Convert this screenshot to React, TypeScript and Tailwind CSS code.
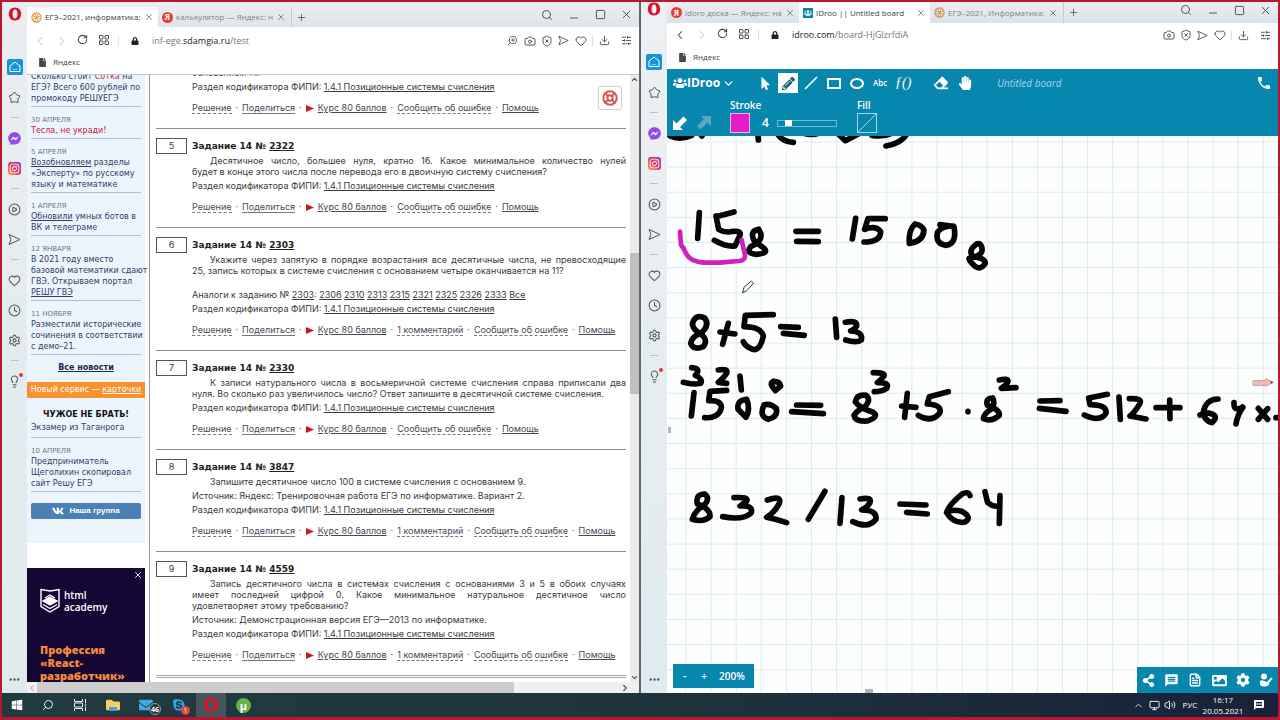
import type { ReactNode } from 'react';
import {
  Search, Minus, Square, X, Plus, ChevronLeft, ChevronRight, ChevronDown, ChevronUp, RotateCw, LayoutGrid,
  Camera, ShieldX, Heart, Download, SlidersHorizontal, CirclePlay, Clock,
  Settings, Lightbulb, Ellipsis, ZoomIn, FileText, Monitor, Volume2, LifeBuoy,
} from 'lucide-react';
import {
  FaMousePointer, FaPencilAlt, FaEraser, FaHandPaper, FaCog, FaShareAlt, FaUsers, FaVk, FaLock,
  FaInstagram, FaFacebookMessenger, FaWindows, FaImage, FaFile, FaSkype, FaEnvelope, FaFolder,
} from 'react-icons/fa';
import { MdMessage, MdPhone } from 'react-icons/md';

/* ---------- small marks ---------- */

function OperaMark({ className }: { className: string }) {
  return (
    <svg viewBox="0 0 14 14" className={className} aria-hidden="true">
      <path fillRule="evenodd" fill="#d4142c" d="M7 .5C3.200.5.8 3.300.8 7s2.400 6.500 6.200 6.500 6.200-2.800 6.200-6.500S10.800.5 7 .5Zm0 2c1.700 0 2.500 2 2.500 4.500S8.700 11.500 7 11.500 4.500 9.500 4.500 7 5.300 2.500 7 2.500Z" />
    </svg>
  );
}

function EgeMark() {
  return (
    <svg viewBox="0 0 12 12" className="size-[11px] shrink-0" fill="none" stroke="#d98b3f" aria-hidden="true">
      <circle cx="6" cy="6" r="5" strokeWidth="1.2" />
      <path d="M1.500 4 10.500 8M1.500 8 10.500 4M4 1.500 8 10.500M8 1.500 4 10.500" strokeWidth=".9" />
    </svg>
  );
}

function YandexMark() {
  return (
    <span className="flex size-[11px] shrink-0 items-center justify-center rounded-full bg-[#e5402f] text-[8px] font-bold leading-none text-white">
      Я
    </span>
  );
}

function DrooMark() {
  return (
    <span className="flex size-[10px] shrink-0 items-center justify-center bg-[#0a84a8] text-white">
      <FaUsers size={8} />
    </span>
  );
}

function PlaneIcon({ className }: { className: string }) {
  return (
    <svg viewBox="0 0 13 13" className={className} fill="none" stroke="currentColor" strokeWidth="1" strokeLinejoin="round" aria-hidden="true">
      <path d="M1 1.500 12 6.500 1 11.500 3 6.500Z" />
    </svg>
  );
}

function StarIcon() {
  return (
    <svg viewBox="0 0 13 13" className="size-[13px]" fill="none" stroke="currentColor" strokeWidth="1" strokeLinejoin="round" aria-hidden="true">
      <path d="M6.500 1 8.600 3.700 12 5 10 7.900 9.900 11.500 6.500 10.700 3.100 11.500 3 7.900 1 5 4.400 3.700Z" />
    </svg>
  );
}

function HomeIcon() {
  return (
    <svg viewBox="0 0 12 12" className="size-[12px]" fill="none" stroke="currentColor" strokeWidth="1" strokeLinejoin="round" aria-hidden="true">
      <path d="M6 1 11 5V10.500H1V5Z" />
      <path d="M3.500 8.500H8.500" strokeOpacity=".5" />
    </svg>
  );
}

/* ---------- browser chrome ---------- */

type TabInfo = { title: string; icon: 'ege' | 'yandex' | 'droo'; active?: boolean };

function Tab({ tab }: { tab: TabInfo }) {
  return (
    <div
      className={
        tab.active
          ? 'flex w-[131px] items-center gap-[3px] bg-white pl-[4px] pr-[4px] text-[#3c4043]'
          : 'flex w-[132px] items-center gap-[3px] pl-[4px] pr-[4px] text-[#7b838a]'
      }
    >
      {tab.icon === 'ege' && <EgeMark />}
      {tab.icon === 'yandex' && <YandexMark />}
      {tab.icon === 'droo' && <DrooMark />}
      <button className="min-w-0 flex-1 whitespace-nowrap text-left text-[8px] leading-[14px]">{tab.title}</button>
      <button aria-label="Закрыть вкладку" className="shrink-0 text-[#555]">
        <X size={10} strokeWidth={1.6} />
      </button>
    </div>
  );
}

function SideSlot({ label, children }: { label: string; children: ReactNode }) {
  return (
    <button aria-label={label} className="relative flex h-[30px] w-full shrink-0 items-center justify-center">
      {children}
    </button>
  );
}

function SideDash() {
  return (
    <div className="flex h-[11px] shrink-0 items-center justify-center">
      <div className="h-px w-2 bg-[#b9c1c4]" />
    </div>
  );
}

function OperaSidebar({ upper }: { upper?: boolean }) {
  return (
    <nav
      className={
        upper
          ? 'flex w-[26px] shrink-0 flex-col bg-linear-to-b from-[#eef0f2] to-[#dfebef] text-[#4d5558]'
          : 'flex w-[25px] shrink-0 flex-col bg-linear-to-b from-[#e9edf0] to-[#e0eaed] text-[#4d5558]'
      }
    >
      <button aria-label="Opera" className={upper ? 'flex h-[45px] justify-center' : 'flex h-[50px] justify-center pt-[5px]'}>
        <OperaMark className="size-[14px]" />
      </button>
      <SideSlot label="Главная">
        <span className="flex size-[16px] items-center justify-center rounded-[2px] bg-[#1595d8] text-white">
          <HomeIcon />
        </span>
      </SideSlot>
      <SideSlot label="Закладки"><StarIcon /></SideSlot>
      <SideDash />
      <SideSlot label="Messenger"><FaFacebookMessenger size={13} color="#9148f0" /></SideSlot>
      <SideSlot label="Instagram">
        <span className="flex size-[13px] items-center justify-center rounded-[3px] bg-linear-to-tr from-[#f9a13c] via-[#e1306c] to-[#8a3ab9] text-white">
          <FaInstagram size={11} />
        </span>
      </SideSlot>
      <SideDash />
      <SideSlot label="Плеер"><CirclePlay size={13} strokeWidth={1.9} /></SideSlot>
      <SideSlot label="Мой поток"><PlaneIcon className="size-[13px]" /></SideSlot>
      <SideDash />
      <SideSlot label="Избранное"><Heart size={13} strokeWidth={1.9} /></SideSlot>
      <SideSlot label="История"><Clock size={13} strokeWidth={1.9} /></SideSlot>
      <SideSlot label="Настройки"><Settings size={13} strokeWidth={1.9} /></SideSlot>
      <SideDash />
      <SideSlot label="Советы">
        <Lightbulb size={13} strokeWidth={1.9} />
        <span className="absolute right-[4px] top-[7px] size-[4px] rounded-full bg-[#d9413c]" />
      </SideSlot>
      <button aria-label="Ещё" className="mt-auto flex h-[28px] items-center justify-center">
        <Ellipsis size={13} strokeWidth={2.500} />
      </button>
    </nav>
  );
}

function ToolIcon({ label, children }: { label: string; children: ReactNode }) {
  return (
    <button aria-label={label} className="flex h-5 w-[17px] items-center justify-center">
      {children}
    </button>
  );
}

type WindowProps = {
  tabs: TabInfo[];
  host: string;
  prefix?: string;
  path: string;
  upper?: boolean;
  children: ReactNode;
};

function BrowserWindow({ tabs, host, prefix, path, upper, children }: WindowProps) {
  return (
    <section className="flex min-w-0 flex-1 border-l-2 border-[#5d686c] bg-white first:border-l-0">
      <OperaSidebar upper={upper} />
      <div className="flex min-w-0 flex-1 flex-col">
        <header
          className={
            upper
              ? 'flex h-[21px] shrink-0 bg-linear-to-b from-[#eeedf2] to-[#dae3e8]'
              : 'flex h-[25px] shrink-0 bg-linear-to-b from-[#eeedf2] to-[#dce6ea] pt-[5px]'
          }
        >
          {tabs.map((t) => <Tab key={t.title} tab={t} />)}
          <button aria-label="Новая вкладка" className="ml-[1px] border-l border-[#c5ccd1] px-[4px] text-[#444]">
            <Plus size={11} strokeWidth={1.6} />
          </button>
          <div className="ml-auto flex items-center pb-[5px] text-[#3c4a52]">
            <button aria-label="Поиск" className="flex w-[27px] justify-center"><Search size={12} strokeWidth={1.8} /></button>
            <button aria-label="Свернуть" className="flex w-[27px] justify-center pt-[6px]"><Minus size={12} strokeWidth={1.8} /></button>
            <button aria-label="Развернуть" className="flex w-[27px] justify-center"><Square size={11} strokeWidth={2} /></button>
            <button aria-label="Закрыть" className="flex w-[25px] justify-center"><X size={13} strokeWidth={1.6} /></button>
          </div>
        </header>
        <div className={upper ? 'flex h-[24px] shrink-0 items-center text-[#444]' : 'flex h-[27px] shrink-0 items-center text-[#444]'}>
          <div className="flex pl-[2px]">
            <button aria-label="Назад" className={upper ? 'flex w-[22px] justify-center' : 'flex w-[22px] justify-center text-[#c6c6c6]'}><ChevronLeft size={14} strokeWidth={1.8} /></button>
            <button aria-label="Вперёд" className="flex w-[21px] justify-center text-[#c6c6c6]"><ChevronRight size={14} strokeWidth={1.8} /></button>
            <button aria-label="Обновить" className="flex w-[21px] justify-center"><RotateCw size={11} strokeWidth={2.2} /></button>
            <button aria-label="Экспресс-панель" className="flex w-[21px] justify-center"><LayoutGrid size={12} strokeWidth={1.9} /></button>
          </div>
          <div className="ml-[4px] h-[10px] w-px bg-[#e0e0e0]" />
          <FaLock size={8} className="ml-[12px] shrink-0" color="#222" />
          <a href={'#' + path} aria-label="Адрес страницы" className="ml-[13px] min-w-0 flex-1 whitespace-nowrap text-[9px] leading-[14px] text-[#777]">
            {prefix}<span className="text-[#222]">{host}</span>{path}
          </a>
          <div className="flex items-center pr-[4px]">
            {!upper && <ToolIcon label="Масштаб"><ZoomIn size={11} strokeWidth={1.8} className="-scale-x-100" /></ToolIcon>}
            <ToolIcon label="Снимок"><Camera size={12} strokeWidth={1.8} /></ToolIcon>
            <ToolIcon label="Блокировка"><ShieldX size={12} strokeWidth={1.8} /></ToolIcon>
            <ToolIcon label="Отправить"><PlaneIcon className="size-[11px]" /></ToolIcon>
            <ToolIcon label="В закладки"><Heart size={12} strokeWidth={1.8} /></ToolIcon>
            <div className="mx-[3px] h-[10px] w-px bg-[#e0e0e0]" />
            <ToolIcon label="Загрузки"><Download size={11} strokeWidth={1.9} /></ToolIcon>
            <div className="w-[5px]" />
            <ToolIcon label="Простые настройки"><SlidersHorizontal size={11} strokeWidth={1.9} /></ToolIcon>
          </div>
        </div>
        <div
          className={
            upper
              ? 'flex h-[22px] shrink-0 items-center gap-[6px] pb-[2px] pl-[11px]'
              : 'flex h-[21px] shrink-0 items-center gap-[6px] border-b border-[#c3c7c9] pl-[11px] pb-[4px]'
          }
        >
          <FaFile size={9} color="#4a4a4a" />
          <a href="#yandex" className="text-[8px] leading-[12px] text-[#444]">Яндекс</a>
        </div>
        {children}
      </div>
    </section>
  );
}

/* ---------- exam page ---------- */

function NewsItem({ date, children }: { date?: string; children: ReactNode }) {
  return (
    <article className="mx-[4px] border-b border-[#b4bfcd] pb-[2px] pt-[8px]">
      {date && <time className="block text-[7px] leading-[10px] text-[#6c7683]">{date}</time>}
      <p className="whitespace-nowrap text-[8px] leading-[11px] text-[#353c66]">{children}</p>
    </article>
  );
}

function NewsColumn() {
  return (
    <aside className="w-[118px] shrink-0">
      <div className="-mt-[12px] bg-[#ecf4fe] pb-[24px]">
        <NewsItem>Сколько стоит <span className="text-[#b5304a]">Сотка</span> на<br />ЕГЭ? Всего 600 рублей по<br />промокоду РЕШУЕГЭ</NewsItem>
        <NewsItem date="30 АПРЕЛЯ"><span className="text-[#c9203c]">Тесла, не укради!</span></NewsItem>
        <NewsItem date="5 АПРЕЛЯ"><a href="#expert" className="underline">Возобновляем</a> разделы<br />«Эксперту» по русскому<br />языку и математике</NewsItem>
        <NewsItem date="1 АПРЕЛЯ"><a href="#bots" className="underline">Обновили</a> умных ботов в<br />ВК и телеграме</NewsItem>
        <NewsItem date="12 ЯНВАРЯ">В 2021 году вместо<br />базовой математики сдают<br />ГВЭ. Открываем портал<br /><a href="#gve" className="underline">РЕШУ ГВЭ</a></NewsItem>
        <NewsItem date="11 НОЯБРЯ">Разместили исторические<br />сочинения в соответствии<br />с демо–21.</NewsItem>
        <a href="#news" className="block py-[6px] text-center text-[8px] font-bold leading-[14px] text-[#22284d] underline">Все новости</a>
        <p className="mt-[1px] whitespace-nowrap bg-[#f8922f] text-center text-[8px] leading-[16px] text-white">
          Новый сервис — <a href="#cards" className="underline">карточки</a>
        </p>
        <p className="pt-[10px] text-center text-[8px] font-bold leading-[13px] text-[#111]">ЧУЖОЕ НЕ БРАТЬ!</p>
        <p className="mx-[4px] whitespace-nowrap border-b border-[#b4bfcd] pb-[3px] text-[8px] leading-[13px] text-[#353c66]">Экзамер из Таганрога</p>
        <NewsItem date="10 АПРЕЛЯ">Предприниматель<br />Щеголихин скопировал<br />сайт Решу ЕГЭ</NewsItem>
        <a href="#vk" className="mx-[4px] mt-[11px] flex h-[16px] items-center justify-center gap-[5px] rounded-[2px] bg-[#4a80b4] font-['Liberation_Sans',sans-serif] text-[8px] font-bold text-white">
          <FaVk size={12} /> Наша группа
        </a>
      </div>
      <div className="mt-[25px] h-[130px] bg-[#150733] px-[13px] text-white">
        <button aria-label="Закрыть рекламу" className="-mr-[11px] ml-auto block pt-[2px]"><X size={10} /></button>
        <div className="mt-[8px] flex items-center gap-[4px]">
          <svg viewBox="0 0 20 25" className="h-[25px] w-[20px]" fill="none" stroke="white" strokeWidth="1.400" aria-hidden="true">
            <path d="M1 1.500 10 3 19 1.500V18.500L10 24 1 18.500Z" />
            <path d="M3 13 10 9 17 13 10 17Z" fill="white" />
            <path d="M3 16.500 10 20.500 17 16.500M5 10 10 7 15 10" />
          </svg>
          <p className="font-['Open_Sans',sans-serif] text-[10px] font-semibold leading-[12px]">html<br />academy</p>
        </div>
        <p className="mt-[30px] whitespace-nowrap font-['Open_Sans',sans-serif] text-[11px] font-extrabold leading-[13px] text-[#f58b3c]">
          Профессия<br />«React-<br />разработчик»
        </p>
      </div>
    </aside>
  );
}

type Task = {
  n: number;
  id: string;
  lines: string[];
  similar?: string[];
  source?: string;
  comments?: boolean;
};

const tasks: Task[] = [
  {
    n: 5, id: '2322',
    lines: ['Десятичное число, большее нуля, кратно 16. Какое минимальное количество нулей', 'будет в конце этого числа после перевода его в двоичную систему счисления?'],
  },
  {
    n: 6, id: '2303', comments: true,
    lines: ['Укажите через запятую в порядке возрастания все десятичные числа, не превосходящие', '25, запись которых в системе счисления с основанием четыре оканчивается на 11?'],
    similar: ['2306', '2310', '2313', '2315', '2321', '2325', '2326', '2333', 'Все'],
  },
  {
    n: 7, id: '2330',
    lines: ['К записи натурального числа в восьмеричной системе счисления справа приписали два', 'нуля. Во сколько раз увеличилось число? Ответ запишите в десятичной системе счисления.'],
  },
  {
    n: 8, id: '3847', comments: true,
    lines: ['Запишите десятичное число 100 в системе счисления с основанием 9.'],
    source: 'Источник: Яндекс: Тренировочная работа ЕГЭ по информатике. Вариант 2.',
  },
  {
    n: 9, id: '4559', comments: true,
    lines: ['Запись десятичного числа в системах счисления с основаниями 3 и 5 в обоих случаях', 'имеет последней цифрой 0. Какое минимальное натуральное десятичное число', 'удовлетворяет этому требованию?'],
    source: 'Источник: Демонстрационная версия ЕГЭ—2013 по информатике.',
  },
];

function Topic() {
  return (
    <p className="leading-[14px]">
      Раздел кодификатора ФИПИ: <a href="#topic" className="underline">1.4.1 Позиционные системы счисления</a>
    </p>
  );
}

function TaskLinks({ comments }: { comments?: boolean }) {
  const dashed = 'border-b border-dashed border-[#777] leading-[11px]';
  return (
    <div className="mt-[7px] flex h-[14px] items-center gap-[4px] whitespace-nowrap text-[#444a55]">
      <a href="#solution" className={dashed}>Решение</a>
      <span>·</span>
      <a href="#share" className="border-b border-[#777] leading-[11px]">Поделиться</a>
      <span>·</span>
      <svg viewBox="0 0 8 7" className="h-[7px] w-[8px] fill-[#cf1a1a]" aria-hidden="true"><path d="M0 0 8 3.500 0 7Z" /></svg>
      <a href="#course" className="underline">Курс 80 баллов</a>
      <span>·</span>
      {comments && <><a href="#comments" className={dashed}>1 комментарий</a><span>·</span></>}
      <a href="#report" className={dashed}>Сообщить об ошибке</a>
      <span>·</span>
      <a href="#help" className="underline">Помощь</a>
    </div>
  );
}

function TaskCard({ task }: { task: Task }) {
  return (
    <article className="flex border-t border-[#8d8d8d] pb-[13px] pt-[9px]">
      <div className="flex h-[16px] w-[31px] shrink-0 items-center justify-center border border-[#555]">{task.n}</div>
      <div className="min-w-0 flex-1 pl-[5px]">
        <h2 className="font-['DejaVu_Sans',Verdana,sans-serif] font-bold leading-[17px] text-[#222]">
          Задание 14 № <a href={'#' + task.id} className="underline">{task.id}</a>
        </h2>
        <p className="mb-[2px] leading-[11px]">
          {task.lines.map((line, i) => (
            <span
              key={line}
              className={
                (i === 0 ? 'pl-[18px] ' : '') +
                (i < task.lines.length - 1 ? 'block whitespace-nowrap [text-align-last:justify]' : 'block whitespace-nowrap')
              }
            >
              {line}
            </span>
          ))}
        </p>
        {task.similar && (
          <p className="mt-[12px] leading-[14px]">
            Аналоги к заданию № <a href="#2303" className="underline">2303</a>:{' '}
            {task.similar.map((s) => <span key={s}><a href={'#' + s} className="underline">{s}</a> </span>)}
          </p>
        )}
        {task.source && <p className="leading-[14px]">{task.source}</p>}
        <Topic />
        <TaskLinks comments={task.comments} />
      </div>
    </article>
  );
}

function ExamPage() {
  return (
    <>
      <div className="relative flex min-h-0 flex-1 overflow-hidden font-['DejaVu_Sans',Verdana,sans-serif] text-[9px] text-[#3b3b3b]">
        <NewsColumn />
        <main className="ml-[4px] min-w-0 flex-1 overflow-hidden border-l border-[#9a9a9a] pl-[6px] pr-[4px] font-['Inter',Verdana,sans-serif]">
          <div className="-mt-[8px] pb-[13px] pl-[36px]">
            <p className="mb-[2px] leading-[11px]">основанием 11.</p>
            <Topic />
            <TaskLinks />
          </div>
          {tasks.map((t) => <TaskCard key={t.id} task={t} />)}
          <div className="h-[3px] border-y border-[#aaa]" />
        </main>
        <button aria-label="Помощь по сайту" className="absolute right-[17px] top-[11px] flex size-[24px] items-center justify-center rounded-[3px] border border-[#cfcfcf] bg-white">
          <LifeBuoy size={16} color="#d2575a" strokeWidth={3} />
        </button>
        <div className="flex w-[9px] shrink-0 flex-col items-center bg-[#ebebec] text-[#555]">
          <ChevronUp size={9} strokeWidth={3} />
          <div className="mt-[169px] h-[141px] w-full bg-[#bfbfc0]" />
          <ChevronDown size={9} strokeWidth={3} className="mt-auto" />
        </div>
      </div>
      <div className="flex h-[11px] shrink-0 items-center bg-[#f0f0f1] text-[#555]">
        <ChevronLeft size={10} strokeWidth={2.500} className="text-[#aaa]" />
        <div className="h-full w-[78%] bg-[#cdcdcd]" />
        <ChevronRight size={10} strokeWidth={3} className="ml-auto mr-[9px]" />
      </div>
    </>
  );
}

/* ---------- whiteboard ---------- */

const upperStrokes = [
  'M30 18Q60 32 95 16', 'M118 8 126 18', 'M293 0 295 30', 'M350 8Q365 35 400 37', 'M425 8Q455 18 482 8',
  'M535 12 556 32 595 12', 'M636 16Q672 22 700 8', 'M678 48Q735 38 745 0',
  'M118 248 113 325', 'M222 246 168 260M168 258 176 298Q195 310 220 304 244 302 240 316L225 348Q200 352 163 331',
  'M296 298Q268 302 282 332L312 355Q328 370 290 373 256 370 272 350 318 330 296 298',
  'M408 304H475', 'M410 334 475 335', 'M587 265 577 327', 'M676 266H624L614 298Q648 285 662 305 662 336 612 336',
  'M765 282Q745 300 748 340 790 335 792 300 785 285 765 282', 'M840 284 882 290Q892 342 857 346 824 340 833 306 845 288 880 288',
  'M950 342Q922 362 940 380 976 384 976 400 962 422 944 408 920 384 930 384 976 376 964 348 960 338 950 342',
  'M134 564Q106 550 97 582 100 600 122 612 146 630 130 650 100 662 92 640 95 620 125 608 150 584 134 564',
  'M180 606 225 612', 'M205 580 188 643', 'M340 554 256 556 252 590Q302 590 310 618 300 664 278 658 256 650 250 635',
  'M362 590 415 592', 'M370 610 433 616', 'M526 567 530 622', 'M556 577Q592 570 590 588 582 600 572 603 610 605 604 630 590 640 557 630',
];

const middleStrokes = [
  'M95 53Q125 55 106 76 130 88 122 100 100 105 70 97', 'M175 60Q205 55 200 70 190 86 175 97L200 100', 'M240 78 244 120',
  'M340 94Q330 98 336 108L346 122 362 108Q360 94 340 94', 'M102 128 94 198', 'M200 121 150 124 146 152Q186 150 184 175 175 206 134 203',
  'M260 148Q230 150 234 178L258 202Q272 176 260 148', 'M312 165Q296 200 325 208 355 200 349 175 330 158 312 165',
  'M410 165 482 166', 'M395 185 490 191', 'M618 136Q590 132 586 156 600 176 638 186 660 200 622 213 586 216 582 196 590 182 612 172 636 150 618 136',
  'M640 68Q678 68 672 78 660 92 652 98 690 96 680 115 665 125 643 125', 'M742 130 734 202', 'M725 168 768 172',
  'M865 125 808 140 802 162Q846 164 840 188 815 220 775 196', 'M924 184V185',
  'M998 144Q976 144 982 166 1020 178 1018 196 996 216 970 206 972 190 996 176 1006 156 998 144', 'M1018 90Q1044 84 1044 94 1040 106 1024 115L1068 113',
  'M134 432Q106 432 112 462 152 476 150 500 130 518 97 508 104 482 132 466 152 446 134 432',
  'M222 443Q268 440 260 454L240 468Q280 465 274 488 250 512 188 500', 'M322 450Q366 435 358 460 345 486 320 502 350 508 380 518',
  'M495 424 445 508', 'M546 443 540 520', 'M600 447Q636 440 630 458 620 474 605 480 652 480 648 508 625 538 578 515',
  'M720 462 798 465', 'M740 487 802 492', 'M930 437Q925 422 905 433 866 465 860 488 880 522 915 516 938 502 905 484 876 476 860 488',
  'M975 425 983 458Q1000 472 1018 468', 'M1020 437 1018 520',
];

const rightStrokes = [
  'M120 153 180 152', 'M118 175 198 184', 'M322 133 266 144 270 164Q322 164 318 190 300 218 253 195', 'M357 141 361 208',
  'M388 146Q428 144 420 160 405 186 390 198L438 207', 'M468 173H540', 'M509 150 510 206',
  'M654 147Q618 148 610 186 614 214 636 218 656 200 636 192 614 184 600 195', 'M702 158Q700 186 728 172', 'M728 172Q712 196 708 222',
  'M775 175 803 208', 'M803 176 775 208', 'M828 203H834',
];

function Board() {
  return (
    <svg className="block size-full" role="img" aria-label="Записи на доске">
      <defs>
        <pattern id="grid" x="18.500" y="5.500" width="25.100" height="25.130" patternUnits="userSpaceOnUse">
          <path d="M.5 0V25.130M0 .5H25.100" stroke="#dfe9f0" strokeWidth="1" fill="none" />
        </pattern>
      </defs>
      <rect width="100%" height="100%" fill="#fdfefe" />
      <rect width="100%" height="100%" fill="url(#grid)" />
      <g fill="none" stroke="#050505" strokeWidth="17" strokeLinecap="round" strokeLinejoin="round">
        <g transform="translate(-7 -6) scale(.3333)">
          {upperStrokes.map((d) => <path key={d} d={d} />)}
          <path d="M60 305 63 345Q70 352 76 366 88 396 135 398L180 398 235 393Q256 392 255 376L245 330" stroke="#cf22bd" strokeWidth="14" />
          <path d="M248 487 252 472 274 453 281 460 260 482Z" fill="#fff" stroke="#333" strokeWidth="3" />
        </g>
        <g transform="translate(-7 214) scale(.3333)">{middleStrokes.map((d) => <path key={d} d={d} />)}</g>
        <g transform="translate(333 214) scale(.3333)">
          {rightStrokes.map((d) => <path key={d} d={d} />)}
          <path d="M760 92H798V86L820 97 798 108V106H760Z" fill="#f4bcb9" stroke="#cf9794" strokeWidth="3" />
          <path d="M812 93 820 97 812 101Z" fill="#444" stroke="none" />
        </g>
      </g>
      <rect x="1" y="291" width="3" height="6" fill="#aeb4b8" />
      <rect x="198" y="553" width="8" height="4" fill="#aeb4b8" />
    </svg>
  );
}

function BoardTool({ label, active, children }: { label: string; active?: boolean; children: ReactNode }) {
  return (
    <button
      aria-label={label}
      className={
        active
          ? 'flex size-[20px] items-center justify-center bg-white text-[#17627a]'
          : 'flex h-[20px] w-[20px] items-center justify-center text-white'
      }
    >
      {children}
    </button>
  );
}

function BoardToolbar() {
  return (
    <div className="h-[67px] shrink-0 bg-[#0786ae] pt-[4px] text-white">
      <div className="flex h-[20px] items-center pl-[6px] pr-[6px]">
        <button className="flex items-center text-[12px] font-bold leading-[16px]">
          <FaUsers size={14} />IDroo<ChevronDown size={13} strokeWidth={2.500} className="ml-[2px]" />
        </button>
        <div className="ml-[20px] flex gap-[3px]">
          <BoardTool label="Select"><FaMousePointer size={13} /></BoardTool>
          <BoardTool label="Pencil" active><FaPencilAlt size={13} /></BoardTool>
          <BoardTool label="Line"><svg viewBox="0 0 14 14" className="size-[14px]" stroke="white" strokeWidth="1.600"><path d="M1 13 13 1" /></svg></BoardTool>
          <BoardTool label="Rectangle"><span className="h-[11px] w-[14px] border-2 border-white" /></BoardTool>
          <BoardTool label="Ellipse"><span className="h-[11px] w-[14px] rounded-[50%] border-2 border-white" /></BoardTool>
          <BoardTool label="Text"><span className="text-[8px] font-semibold">Abc</span></BoardTool>
          <BoardTool label="Formula"><span className="font-['Liberation_Serif',serif] text-[14px] italic leading-none">ƒ()</span></BoardTool>
        </div>
        <div className="ml-[18px] flex gap-[4px]">
          <BoardTool label="Eraser"><FaEraser size={14} /></BoardTool>
          <BoardTool label="Hand"><FaHandPaper size={14} /></BoardTool>
        </div>
        <p className="ml-[22px] text-[10px] italic leading-[16px] text-[#9fd8ea]">Untitled board</p>
        <button aria-label="Call" className="ml-auto"><MdPhone size={16} /></button>
      </div>
      <div className="flex items-end pl-[6px] pt-[4px]">
        <button aria-label="Undo" className="flex h-[22px] w-[24px] items-end pb-[3px]">
          <svg viewBox="0 0 14 14" className="size-[14px] fill-white"><path d="M0 4V14H10L7 11 14 4 10.500.5 3.500 7.500Z" /></svg>
        </button>
        <button aria-label="Redo" className="flex h-[22px] w-[26px] items-end pb-[3px]">
          <svg viewBox="0 0 14 14" className="size-[14px] rotate-180 fill-[#58a9c4]"><path d="M0 4V14H10L7 11 14 4 10.500.5 3.500 7.500Z" /></svg>
        </button>
        <div className="ml-[7px] flex flex-col">
          <span className="text-[10px] font-semibold leading-[16px]">Stroke</span>
          <div className="flex items-center">
            <button aria-label="Stroke colour" className="size-[20px] border border-[#f3b6ec] bg-[#e31bc8]" />
            <label htmlFor="width" className="ml-[12px] text-[12px] font-semibold leading-[16px]">4</label>
            <input
              id="width"
              type="range"
              min={1}
              max={24}
              defaultValue={4}
              className="ml-[8px] h-[7px] w-[60px] appearance-none border border-[#6cbcd4] bg-transparent [&::-webkit-slider-thumb]:h-[6px] [&::-webkit-slider-thumb]:w-[7px] [&::-webkit-slider-thumb]:appearance-none [&::-webkit-slider-thumb]:bg-white"
            />
          </div>
        </div>
        <div className="ml-[20px] flex flex-col">
          <span className="text-[10px] font-semibold leading-[16px]">Fill</span>
          <button aria-label="Fill colour" className="size-[20px] border border-[#9fd8ea]">
            <svg viewBox="0 0 18 18" className="size-full" stroke="#9fd8ea"><path d="M0 18 18 0" /></svg>
          </button>
        </div>
      </div>
    </div>
  );
}

function BoardPage() {
  return (
    <>
      <BoardToolbar />
      <div className="relative min-h-0 flex-1 overflow-hidden">
        <Board />
        <div className="absolute bottom-[5px] left-[6px] flex h-[24px] w-[81px] items-center bg-[#0786ae] text-[10px] font-semibold text-white">
          <button aria-label="Zoom out" className="w-[20px] pl-[3px]">-</button>
          <button aria-label="Zoom in" className="w-[22px]">+</button>
          <span className="pl-[4px]">200%</span>
        </div>
        <div className="absolute bottom-0 right-0 flex h-[26px] w-[141px] items-center justify-around bg-[#0786ae] text-white">
          <button aria-label="Share"><FaShareAlt size={13} /></button>
          <button aria-label="Chat"><MdMessage size={15} /></button>
          <button aria-label="Pages"><FileText size={14} strokeWidth={2.500} /></button>
          <button aria-label="Images"><FaImage size={15} /></button>
          <button aria-label="Settings"><FaCog size={14} /></button>
          <button aria-label="Participants">
            <svg viewBox="0 0 14 14" className="size-[14px] fill-white"><circle cx="5" cy="3.500" r="3" /><path d="M1 8Q3 6.500 5 8L8 9 12 4.500 13.800 5.500 10 10V12Q5 15 1 12Z" /></svg>
          </button>
        </div>
      </div>
    </>
  );
}

/* ---------- taskbar ---------- */

function Taskbar() {
  const slot = 'relative flex h-full w-[33px] items-center justify-center';
  return (
    <footer className="flex h-[24px] shrink-0 items-center bg-linear-to-r from-[#203b40] via-[#1f333c] to-[#18223a] text-white">
      <button aria-label="Пуск" className="flex w-[30px] justify-center"><FaWindows size={12} /></button>
      <button aria-label="Поиск" className="flex w-[32px] justify-center"><Search size={12} strokeWidth={1.800} className="-scale-x-100" /></button>
      <button aria-label="Представление задач" className="flex w-[32px] justify-center">
        <svg viewBox="0 0 13 12" className="h-[12px] w-[13px]" stroke="#e8eef0" fill="none"><path d="M.5 0V2.500H8.500V0M.5 12V9.500H8.500V12M.5 4H8.500V8H.5ZM11.500 0V4.500M11.500 7.500V12M10.500 6H12.500" /></svg>
      </button>
      <button aria-label="Проводник" className={slot}>
        <FaFolder size={14} color="#f3cf65" />
        <span className="absolute bottom-[6px] h-[4px] w-[8px] bg-[#4b9dd6]" />
      </button>
      <button aria-label="Почта" className={slot}>
        <FaEnvelope size={14} color="#3fa9e8" />
        <span className="absolute bottom-[2px] right-[1px] flex size-[12px] items-center justify-center rounded-full border border-[#8d989c] bg-[#2b3a40] text-[7px] font-bold leading-none">46</span>
      </button>
      <button aria-label="Skype" className={slot}>
        <FaSkype size={14} color="#26a8ea" />
        <span className="absolute bottom-[2px] right-[5px] flex size-[9px] items-center justify-center rounded-full bg-[#e0433b] text-[7px] leading-none">1</span>
      </button>
      <button aria-label="Opera" className="ml-px flex h-full w-[30px] items-center justify-center bg-[#45565c]"><OperaMark className="size-[16px]" /></button>
      <button aria-label="uTorrent" className="ml-px flex h-full w-[33px] items-center justify-center">
        <span className="flex size-[15px] items-center justify-center rounded-full bg-[#68b04a] text-[11px] font-bold leading-none">µ</span>
      </button>
      <div className="ml-auto flex items-center pr-[13px] text-[8px] leading-[12px]">
        <button aria-label="Скрытые значки" className="flex w-[16px] justify-center"><ChevronUp size={11} strokeWidth={1.800} /></button>
        <button aria-label="Сеть" className="flex w-[16px] justify-center"><Monitor size={11} strokeWidth={2} /></button>
        <button aria-label="Звук" className="flex w-[16px] justify-center"><Volume2 size={12} strokeWidth={1.800} /></button>
        <button className="w-[24px] text-center">РУС</button>
        <time className="w-[42px] text-center leading-[11px]">16:17<br />20.05.2021</time>
        <button aria-label="Уведомления" className="ml-[9px]"><MdMessage size={12} /></button>
      </div>
    </footer>
  );
}

export default function App() {
  return (
    <div className="flex h-screen w-full flex-col overflow-hidden border-x-2 border-b-[3px] border-t-2 border-[#b5182f] font-['Open_Sans','Noto_Sans',sans-serif]">
      <div className="flex min-h-0 flex-1">
        <BrowserWindow
          tabs={[
            { title: 'ЕГЭ–2021, информатика:', icon: 'ege', active: true },
            { title: 'калькулятор — Яндекс: н', icon: 'yandex' },
          ]}
          prefix="inf-ege."
          host="sdamgia.ru"
          path="/test"
        >
          <ExamPage />
        </BrowserWindow>
        <BrowserWindow
          upper
          tabs={[
            { title: 'idoro доска — Яндекс: на', icon: 'yandex' },
            { title: 'IDroo || Untitled board', icon: 'droo', active: true },
            { title: 'ЕГЭ–2021, Информатика:', icon: 'ege' },
          ]}
          host="idroo.com"
          path="/board-HjGlzrfdiA"
        >
          <BoardPage />
        </BrowserWindow>
      </div>
      <Taskbar />
    </div>
  );
}
